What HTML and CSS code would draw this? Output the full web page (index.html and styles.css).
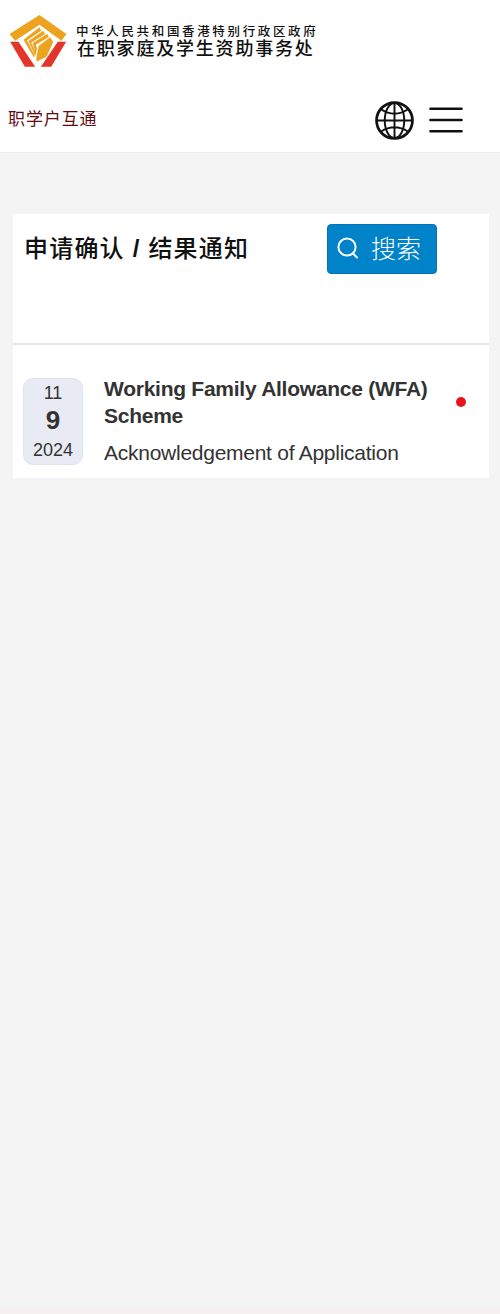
FILE: index.html
```html
<!DOCTYPE html>
<html lang="zh-Hans">
<head>
    <meta charset="UTF-8">
    <meta name="viewport" content="width=device-width, initial-scale=1.0">
    <title>职学户互通</title>
    <link rel="stylesheet" href="styles.css">
</head>
<body>
    <header class="header">
        <div class="brand">
            <svg class="logo" viewBox="27 31 171 156">
                <path fill="#eda31e" d="M117 31L198 88L183 108L117 60L44 108L27 88Z"/>
                <path fill="#e5352b" d="M29 111H54L104 186H73ZM197 111H172L121 186H152Z"/>
                <path fill="#eda31e" d="M117 68L122 78L80 107L103 153L100 158L69 105ZM128 78L134 88L92 114L107 146L104 153L84 109ZM140 87L145 97L106 120L110 132L106 145L96 116ZM149 98L158 112L138 156L108 171L108 156L115 123Z"/>
            </svg>
            <div class="brand-text">
                <p class="gov">中华人民共和国香港特别行政区政府</p>
                <p class="office">在职家庭及学生资助事务处</p>
            </div>
        </div>
        <div class="nav">
            <a class="system">职学户互通</a>
            <svg class="globe" viewBox="0 0 40 40" fill="none" stroke="#111" stroke-width="2">
                <circle cx="20" cy="20" r="18.4" stroke-width="2.8"/>
                <ellipse cx="20" cy="20" rx="10" ry="18"/>
                <path d="M20 2V38M2 20H38M6 8.5Q20 17.5 34 8.5M6 31.5Q20 22.5 34 31.5"/>
            </svg>
            <svg class="menu" viewBox="0 0 34 28" stroke="#111" stroke-width="2.6" stroke-linecap="round">
                <path d="M1.5 2.7H32.5M1.5 14H32.5M1.5 25.2H32.5"/>
            </svg>
        </div>
    </header>
    <main class="card">
        <section class="top">
            <h1>申请确认 <b>/</b> 结果通知</h1>
            <button class="search">
                <svg viewBox="0 0 22 22" fill="none" stroke="#fff" stroke-width="2" stroke-linecap="round">
                    <circle cx="10" cy="10" r="8.6"/>
                    <path d="M16 16.5L20 20.5"/>
                </svg>
                <span>搜索</span>
            </button>
        </section>
        <section class="item">
            <div class="date">
                <span>11</span>
                <strong>9</strong>
                <span>2024</span>
            </div>
            <div class="info">
                <h2>Working Family Allowance (WFA) Scheme</h2>
                <p>Acknowledgement of Application</p>
            </div>
            <i class="dot"></i>
        </section>
    </main>
</body>
</html>
```
FILE: styles.css
```css
*{
    box-sizing: border-box;
}
body{
    margin: 0;
    min-height: 1314px;
    background: linear-gradient(#f4f4f4 1305px, #f7f0f0 1310px);
    font-family: "Liberation Sans", "Noto Sans CJK SC", sans-serif;
    color: #333;
}
h1, h2, p{
    margin: 0;
}
.header{
    height: 153px;
    padding: 15px 0 0 9px;
    background: #fff;
    border-bottom: 1px solid #eee;
}
.brand{
    display: flex;
    height: 52px;
}
.logo{
    width: 58px;
    height: 52px;
}
.brand-text{
    margin: 10px 0 0 9px;
    color: #111;
    white-space: nowrap;
}
.gov{
    font-size: 12.5px;
    font-weight: 500;
    line-height: 15px;
    letter-spacing: 2.65px;
}
.office{
    font-size: 18px;
    font-weight: 500;
    line-height: 19px;
    letter-spacing: 1.8px;
    padding-left: 1px;
}
.nav{
    display: flex;
    align-items: center;
    height: 40px;
    margin-top: 33px;
}
.system{
    width: 366px;
    font-size: 17px;
    line-height: 24px;
    letter-spacing: 0.9px;
    color: #650b10;
    margin: -1px 0 0 -1px;
}
.globe{
    width: 39px;
    height: 39px;
    margin-left: 1px;
}
.menu{
    width: 34px;
    height: 28px;
    margin-left: 15px;
}
.card{
    width: 476px;
    margin: 61px 0 0 13px;
    background: #fff;
}
.top{
    display: flex;
    align-items: flex-start;
    height: 131px;
    padding: 10px 0 0 11px;
    border-bottom: 2px solid #e7e7e8;
}
h1{
    width: 303px;
    font-size: 24px;
    font-weight: 500;
    line-height: 50px;
    letter-spacing: 1.2px;
    color: #111;
}
.search{
    display: flex;
    align-items: center;
    width: 110px;
    height: 50px;
    padding: 0 0 2px 9px;
    border: 1px solid #0871b5;
    border-radius: 4px;
    background: #0083c9;
    color: #fff;
    font-family: "Noto Sans CJK SC", sans-serif;
    font-size: 25px;
    font-weight: 300;
}
.search span{
    margin-top: -3px;
}
.search svg{
    width: 22px;
    height: 22px;
    margin-right: 12px;
}
.item{
    display: flex;
    height: 133px;
    padding: 33px 0 0 10px;
}
.date{
    display: flex;
    flex-direction: column;
    align-items: center;
    width: 60px;
    height: 87px;
    padding-top: 3px;
    border: 1px solid #dde3f0;
    border-radius: 10px;
    background: #e8ebf4;
    font-size: 18px;
    line-height: 22px;
}
.date strong{
    font-size: 26px;
    line-height: 34px;
    margin-top: -1px;
    margin-bottom: 2px;
}
.info{
    width: 330px;
    margin: -3px 0 0 21px;
    letter-spacing: -0.26px;
}
h2{
    font-size: 21px;
    line-height: 27px;
}
.info p{
    margin-top: 10px;
    font-size: 21px;
    line-height: 27px;
    white-space: nowrap;
}
.dot{
    width: 10px;
    height: 10px;
    margin: 19px 0 0 22px;
    border-radius: 50%;
    background: #e9131b;
}
```
